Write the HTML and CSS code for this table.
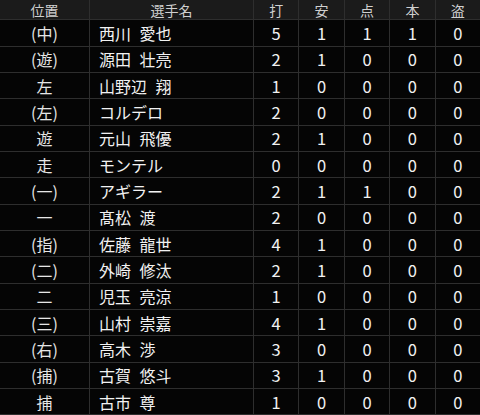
FILE: index.html
```html
<!DOCTYPE html>
<html lang="ja">
<head>
<meta charset="utf-8">
<link rel="stylesheet" href="styles.css">
</head>
<body>
<div class="table">
  <div class="cell head">位置</div><div class="cell head">選手名</div><div class="cell head">打</div><div class="cell head">安</div><div class="cell head">点</div><div class="cell head">本</div><div class="cell head">盗</div>

  <div class="cell pos">(中)</div><div class="cell name">西川 愛也</div><div class="cell num">5</div><div class="cell num">1</div><div class="cell num">1</div><div class="cell num">1</div><div class="cell num">0</div>
  <div class="cell pos">(遊)</div><div class="cell name">源田 壮亮</div><div class="cell num">2</div><div class="cell num">1</div><div class="cell num">0</div><div class="cell num">0</div><div class="cell num">0</div>
  <div class="cell pos">左</div><div class="cell name">山野辺 翔</div><div class="cell num">1</div><div class="cell num">0</div><div class="cell num">0</div><div class="cell num">0</div><div class="cell num">0</div>
  <div class="cell pos">(左)</div><div class="cell name">コルデロ</div><div class="cell num">2</div><div class="cell num">0</div><div class="cell num">0</div><div class="cell num">0</div><div class="cell num">0</div>
  <div class="cell pos">遊</div><div class="cell name">元山 飛優</div><div class="cell num">2</div><div class="cell num">1</div><div class="cell num">0</div><div class="cell num">0</div><div class="cell num">0</div>
  <div class="cell pos">走</div><div class="cell name">モンテル</div><div class="cell num">0</div><div class="cell num">0</div><div class="cell num">0</div><div class="cell num">0</div><div class="cell num">0</div>
  <div class="cell pos">(一)</div><div class="cell name">アギラー</div><div class="cell num">2</div><div class="cell num">1</div><div class="cell num">1</div><div class="cell num">0</div><div class="cell num">0</div>
  <div class="cell pos">一</div><div class="cell name">髙松 渡</div><div class="cell num">2</div><div class="cell num">0</div><div class="cell num">0</div><div class="cell num">0</div><div class="cell num">0</div>
  <div class="cell pos">(指)</div><div class="cell name">佐藤 龍世</div><div class="cell num">4</div><div class="cell num">1</div><div class="cell num">0</div><div class="cell num">0</div><div class="cell num">0</div>
  <div class="cell pos">(二)</div><div class="cell name">外崎 修汰</div><div class="cell num">2</div><div class="cell num">1</div><div class="cell num">0</div><div class="cell num">0</div><div class="cell num">0</div>
  <div class="cell pos">二</div><div class="cell name">児玉 亮涼</div><div class="cell num">1</div><div class="cell num">0</div><div class="cell num">0</div><div class="cell num">0</div><div class="cell num">0</div>
  <div class="cell pos">(三)</div><div class="cell name">山村 崇嘉</div><div class="cell num">4</div><div class="cell num">1</div><div class="cell num">0</div><div class="cell num">0</div><div class="cell num">0</div>
  <div class="cell pos">(右)</div><div class="cell name">高木 渉</div><div class="cell num">3</div><div class="cell num">0</div><div class="cell num">0</div><div class="cell num">0</div><div class="cell num">0</div>
  <div class="cell pos">(捕)</div><div class="cell name">古賀 悠斗</div><div class="cell num">3</div><div class="cell num">1</div><div class="cell num">0</div><div class="cell num">0</div><div class="cell num">0</div>
  <div class="cell pos">捕</div><div class="cell name">古市 尊</div><div class="cell num">1</div><div class="cell num">0</div><div class="cell num">0</div><div class="cell num">0</div><div class="cell num">0</div>
</div>
</body>
</html>
```

FILE: styles.css
```css
html, body {
  margin: 0;
  padding: 0;
  background: #000;
}
body {
  width: 480px;
  height: 415px;
  overflow: hidden;
  font-family: "Noto Sans CJK JP", "Noto Sans", sans-serif;
}
.table {
  display: grid;
  grid-template-columns: 89px 163px repeat(5, 1fr);
  grid-template-rows: 19.33px repeat(15, 25.33px);
  gap: 1px;
  background: #2e2e2e;
  border-bottom: 1px solid #2e2e2e;
  width: 480px;
}
.cell {
  display: flex;
  align-items: center;
  justify-content: center;
  background: #050505;
  color: #f2f2f2;
  font-size: 16px;
  line-height: 20px;
  white-space: pre;
}
.head {
  background: #1b1b1b;
  color: #d0d0d0;
  font-size: 14px;
  line-height: 18px;
}
.pos {
  color: #e6e6e6;
}
.name {
  justify-content: flex-start;
  padding-left: 9px;
  word-spacing: 5px;
}
.num {
  font-size: 16.5px;
}
```
